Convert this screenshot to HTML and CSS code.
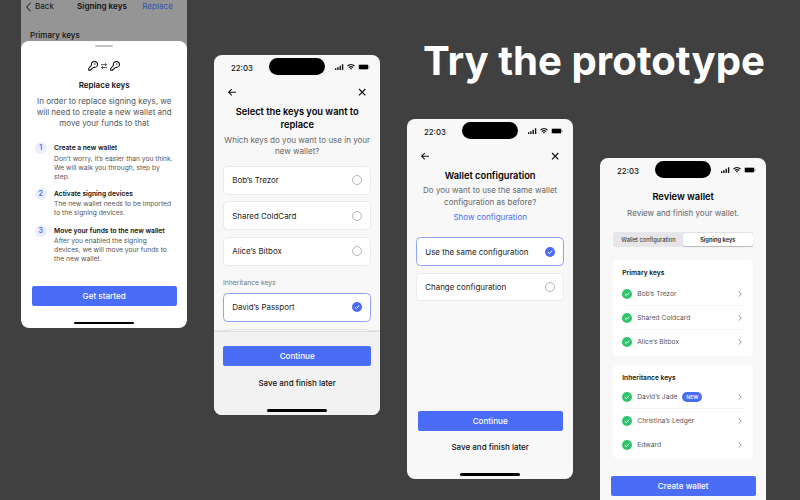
FILE: index.html
```html
<!DOCTYPE html>
<html lang="en">
<head>
<meta charset="utf-8">
<title>Try the prototype</title>
<link rel="stylesheet" href="styles.css">
</head>
<body>
<svg class="defs" width="0" height="0" aria-hidden="true">
  <symbol id="signal" viewBox="0 0 9 6"><path d="M0 4.3h1.4V6H0zM2.2 3.3h1.4V6H2.2zM4.5 1.8h1.4V6H4.5zM6.9 .2h1.4V6H6.9z" fill="#111"/></symbol>
  <symbol id="wifi" viewBox="0 0 8 6"><path d="M.4 2.1a5.2 5.2 0 0 1 7.2 0M1.9 3.6a3 3 0 0 1 4.2 0" fill="none" stroke="#111" stroke-width="1.2"/><path d="M4 5.8 2.9 4.6a1.6 1.6 0 0 1 2.2 0z" fill="#111"/></symbol>
  <symbol id="battery" viewBox="0 0 12 6"><rect x=".2" y=".2" width="10.6" height="5.6" rx="1.6" fill="none" stroke="#999" stroke-width=".4"/><rect x=".8" y=".7" width="9.4" height="4.6" rx="1.1" fill="#000"/><path d="M11.4 2v2" stroke="#999" stroke-width=".6"/></symbol>
  <symbol id="arrow" viewBox="0 0 8 8"><path d="M8 4H.6M3.6 1 .6 4l3 3" fill="none" stroke="#111" stroke-width="1"/></symbol>
  <symbol id="close" viewBox="0 0 8 8"><path d="m1 1 6 6M7 1 1 7" fill="none" stroke="#111" stroke-width="1.15"/></symbol>
  <symbol id="check" viewBox="0 0 10 10"><circle cx="5" cy="5" r="5" fill="currentColor"/><path d="m2.8 5.2 1.5 1.4 2.9-3" fill="none" stroke="#fff" stroke-width="1"/></symbol>
  <symbol id="chevron" viewBox="0 0 4 6"><path d="m.6.4 2.7 2.6L.6 5.6" fill="none" stroke="#777" stroke-width=".8"/></symbol>
  <symbol id="key" viewBox="0 0 10 10"><path d="M4.3 1.4a3 3 0 0 1 4.3 0 3 3 0 0 1 0 4.1 3 3 0 0 1-2.7.8L4.8 7.2l-.9.1-.2 1-1 .1-.2.9H.7V7.5L3.5 4.2a3 3 0 0 1 .8-2.8z" fill="none" stroke="#111" stroke-width="1.05" stroke-linejoin="round"/><circle cx="6.9" cy="3.1" r=".75" fill="#111"/></symbol>
  <symbol id="swap" viewBox="0 0 6 6"><path d="M0 1.6h5.4M4 .2l1.5 1.4L4 3M6 4.5H.6M2 3.1.5 4.5 2 5.9" fill="none" stroke="#222" stroke-width=".75"/></symbol>
</svg>

<main class="board">
  <h1 class="headline">Try the prototype</h1>

  <section class="phone phone-replace">
    <header class="dim-nav">
      <svg class="back-chevron" viewBox="0 0 5 10"><path d="M4.6.6.7 5l3.9 4.4" fill="none" stroke="#111" stroke-width="1"/></svg>
      <span class="back">Back</span>
      <strong class="nav-title">Signing keys</strong>
      <span class="nav-action">Replace</span>
    </header>
    <div class="dim-section">Primary keys</div>
    <div class="sheet">
      <div class="handle"></div>
      <div class="key-swap">
        <svg class="key"><use href="#key"/></svg>
        <svg class="swap"><use href="#swap"/></svg>
        <svg class="key"><use href="#key"/></svg>
      </div>
      <h2 class="sheet-title">Replace keys</h2>
      <p class="sheet-text">In order to replace signing keys, we<br>will need to create a new wallet and<br>move your funds to that</p>
      <ol class="steps">
        <li class="step"><span class="num">1</span><div><h3 class="step-title">Create a new wallet</h3><p class="step-text">Don’t worry, it’s easier than you think.<br>We will walk you through, step by<br>step.</p></div></li>
        <li class="step"><span class="num">2</span><div><h3 class="step-title">Activate signing devices</h3><p class="step-text">The new wallet needs to be imported<br>to the signing devices.</p></div></li>
        <li class="step"><span class="num">3</span><div><h3 class="step-title">Move your funds to the new wallet</h3><p class="step-text">After you enabled the signing<br>devices, we will move your funds to<br>the new wallet.</p></div></li>
      </ol>
      <div class="btn">Get started</div>
      <div class="home"></div>
    </div>
  </section>

  <section class="phone phone-select">
    <header class="status"><span class="time">22:03</span><span class="island"></span><span class="indicators"><svg class="signal"><use href="#signal"/></svg><svg class="wifi"><use href="#wifi"/></svg><svg class="battery"><use href="#battery"/></svg></span></header>
    <nav class="nav"><svg class="nav-icon"><use href="#arrow"/></svg><svg class="nav-icon"><use href="#close"/></svg></nav>
    <h2 class="title">Select the keys you want to<br>replace</h2>
    <p class="subtitle">Which keys do you want to use in your<br>new wallet?</p>
    <div class="options">
      <div class="option"><span>Bob’s Trezor</span><i class="radio"></i></div>
      <div class="option"><span>Shared ColdCard</span><i class="radio"></i></div>
      <div class="option"><span>Alice’s Bitbox</span><i class="radio"></i></div>
    </div>
    <div class="group-label">Inheritance keys</div>
    <div class="options">
      <div class="option selected"><span>David’s Passport</span><svg class="radio-check"><use href="#check"/></svg></div>
      <div class="option peek"></div>
    </div>
    <footer class="footer">
      <div class="btn">Continue</div>
      <div class="link-btn">Save and finish later</div>
      <div class="home"></div>
    </footer>
  </section>

  <section class="phone phone-config">
    <header class="status"><span class="time">22:03</span><span class="island"></span><span class="indicators"><svg class="signal"><use href="#signal"/></svg><svg class="wifi"><use href="#wifi"/></svg><svg class="battery"><use href="#battery"/></svg></span></header>
    <nav class="nav"><svg class="nav-icon"><use href="#arrow"/></svg><svg class="nav-icon"><use href="#close"/></svg></nav>
    <h2 class="title">Wallet configuration</h2>
    <p class="subtitle">Do you want to use the same wallet<br>configuration as before?</p>
    <div class="show-link">Show configuration</div>
    <div class="options">
      <div class="option selected"><span>Use the same configuration</span><svg class="radio-check"><use href="#check"/></svg></div>
      <div class="option"><span>Change configuration</span><i class="radio"></i></div>
    </div>
    <footer class="footer">
      <div class="btn">Continue</div>
      <div class="link-btn">Save and finish later</div>
      <div class="home"></div>
    </footer>
  </section>

  <section class="phone phone-review">
    <header class="status"><span class="time">22:03</span><span class="island"></span><span class="indicators"><svg class="signal"><use href="#signal"/></svg><svg class="wifi"><use href="#wifi"/></svg><svg class="battery"><use href="#battery"/></svg></span></header>
    <h2 class="title">Review wallet</h2>
    <p class="subtitle">Review and finish your wallet.</p>
    <div class="segments"><span class="segment">Wallet configuration</span><span class="segment active">Signing keys</span></div>
    <div class="card">
      <h3 class="card-title">Primary keys</h3>
      <div class="row"><svg class="ok"><use href="#check"/></svg><span>Bob’s Trezor</span><svg class="chevron"><use href="#chevron"/></svg></div>
      <div class="row ruled"><svg class="ok"><use href="#check"/></svg><span>Shared Coldcard</span><svg class="chevron"><use href="#chevron"/></svg></div>
      <div class="row ruled"><svg class="ok"><use href="#check"/></svg><span>Alice’s Bitbox</span><svg class="chevron"><use href="#chevron"/></svg></div>
    </div>
    <div class="card card-inherit">
      <h3 class="card-title">Inheritance keys</h3>
      <div class="row"><svg class="ok"><use href="#check"/></svg><span>David’s Jade</span><span class="badge">NEW</span><svg class="chevron"><use href="#chevron"/></svg></div>
      <div class="row ruled"><svg class="ok"><use href="#check"/></svg><span>Christina’s Ledger</span><svg class="chevron"><use href="#chevron"/></svg></div>
      <div class="row"><svg class="ok"><use href="#check"/></svg><span>Edward</span><svg class="chevron"><use href="#chevron"/></svg></div>
    </div>
    <div class="btn">Create wallet</div>
  </section>
</main>
</body>
</html>
```
FILE: styles.css
```css
* { box-sizing: border-box; margin: 0; padding: 0; }
body { width: 800px; height: 500px; overflow: hidden; background: #404040; font-family: Inter, sans-serif; color: #111; }
svg { display: block; flex: none; }
.defs { position: absolute; }

.board {
  display: grid;
  grid-template-columns: repeat(4, 166.4px);
  column-gap: 26.6px;
  align-items: start;
  height: 500px;
  padding-left: 21px;
  white-space: nowrap;
}
.board > * { grid-row: 1; }
.headline { grid-column: 3 / 5; margin: 36px 0 0 16px; font-size: 40.2px; line-height: 50px; font-weight: 700; color: #fff; }

.phone { display: flex; flex-direction: column; height: 360px; border-radius: 8px; background: #f8f8f8; overflow: hidden; }
.phone-replace { grid-column: 1; height: 327.7px; border-radius: 0 0 8px 8px; background: #959595; }
.phone-select { grid-column: 2; margin-top: 55px; }
.phone-config { grid-column: 3; margin-top: 119px; }
.phone-review { grid-column: 4; margin-top: 158px; }

/* Dimmed screen behind the sheet */
.dim-nav { display: flex; align-items: center; height: 13px; padding: 0 14.5px 0 5px; font-size: 8.1px; line-height: 13px; }
.back-chevron { width: 5px; height: 10px; margin-right: 4px; }
.back { width: 42px; }
.nav-title { font-weight: 600; }
.nav-action { margin-left: auto; color: #3450b4; }
.dim-section { height: 28px; padding: 17px 0 0 9px; font-size: 8px; line-height: 11px; font-weight: 500; }

.sheet { display: flex; flex-direction: column; align-items: center; flex: 1; padding: 4px 10.5px 3.5px; border-radius: 8px; background: #fff; }
.handle { width: 18px; height: 2px; border-radius: 1px; background: #c4c4c4; }
.key-swap { display: flex; align-items: center; gap: 3px; height: 10px; margin-top: 14px; }
.key { width: 10px; height: 10px; }
.swap { width: 6px; height: 6px; }
.sheet-title { margin-top: 8px; font-size: 8px; line-height: 12px; font-weight: 600; }
.sheet-text { margin-top: 5px; font-size: 8px; line-height: 11px; color: #555; text-align: center; }
.steps { align-self: stretch; margin-top: 13px; list-style: none; }
.step { display: flex; gap: 7.2px; margin: 0 0 5px 3px; }
.num { width: 12.4px; height: 12.4px; border-radius: 50%; background: #e9edff; color: #4a6cf7; font-size: 7px; line-height: 12.4px; font-weight: 600; text-align: center; }
.step-title { font-size: 6.68px; line-height: 12px; font-weight: 600; }
.step-text { padding: .6px 0 1.2px; font-size: 6.7px; line-height: 9px; color: #555; }

.btn { align-self: center; width: 145px; height: 20.4px; border-radius: 2px; background: #4a6cf7; color: #fff; font-size: 8.1px; line-height: 20.4px; font-weight: 500; text-align: center; }
.home { align-self: center; width: 60px; height: 2.3px; border-radius: 2px; background: #000; }
.sheet .btn { margin-top: 15.4px; }
.sheet .home { margin-top: auto; }

.status { display: grid; grid-template-columns: 55.5px 56px 1fr; align-items: center; height: 25px; flex: none; }
.time { padding: 1px 0 0 17px; font-size: 7.8px; line-height: 12px; font-weight: 500; }
.island { height: 16.7px; margin-top: -2px; border-radius: 9px; background: #000; }
.indicators { display: flex; align-items: center; gap: 3px; padding-left: 9.6px; margin-top: -2px; }
.signal { width: 9px; height: 6px; }
.wifi { width: 8px; height: 6px; }
.battery { width: 12px; height: 6px; }
.nav { display: flex; justify-content: space-between; align-items: center; height: 24px; padding: 0 13.6px; flex: none; }
.nav-icon { width: 8.4px; height: 8.4px; }

.title { font-size: 9.3px; line-height: 13px; font-weight: 600; text-align: center; color: #000; }
.subtitle { margin-top: 4px; font-size: 8px; line-height: 11.3px; color: #666; text-align: center; }
.options { display: grid; gap: 6.8px; padding: 0 9px; }
.option { display: flex; justify-content: space-between; align-items: center; height: 28.7px; padding: 0 8.3px; border: 1px solid #eaeaea; border-radius: 4.5px; background: #fff; font-size: 7.93px; color: #222; }
.option.selected { border-color: #8ea4fa; }
.radio { width: 10px; height: 10px; border: .9px solid #b4b4b4; border-radius: 50%; }
.radio-check { width: 10px; height: 10px; color: #4a6cf7; }
.group-label { margin: 11.4px 0 5px 9px; font-size: 6.8px; line-height: 11px; color: #777; }
.phone-select .options { margin-top: 8.4px; }
.phone-select .group-label + .options { height: 39px; margin-top: 0; overflow: hidden; }
.phone-select .title { margin-top: 1px; }

.footer { display: flex; flex-direction: column; height: 83px; flex: none; margin-top: auto; padding-top: 14.5px; }
.phone-select .footer { padding-top: 14px; background: #f2f2f2; box-shadow: 0 -1px 2px rgba(0, 0, 0, .18); }
.phone-select .btn { width: 148.5px; }
.phone-select .link-btn { margin-top: 11px; }
.link-btn { margin-top: 10px; font-size: 8px; line-height: 13px; font-weight: 500; text-align: center; }
.footer .home { margin: auto 0 3.5px; }
.show-link { margin-top: 3.6px; font-size: 8px; line-height: 11px; color: #4a6cf7; text-align: center; }
.phone-config .title { margin-top: 1px; }
.phone-config .subtitle { margin-top: 3.4px; }
.phone-config .options { margin-top: 14.6px; }

.phone-review .title { margin-top: 7.4px; }
.phone-review .subtitle { margin-top: 4.6px; }
.segments { display: grid; grid-template-columns: 1fr 1fr; height: 14.5px; margin: 12.8px 13px 0; padding: .8px; border-radius: 3px; background: #e6e6e8; }
.segment { font-size: 5.75px; line-height: 13.4px; text-align: center; color: #222; }
.segment.active { border-radius: 2.5px; background: #fff; box-shadow: 0 .5px 1px rgba(0, 0, 0, .2); font-weight: 600; }
.card { height: 96px; margin: 13.4px 13px 0; padding: 7px 9px 0 9.3px; border-radius: 5px; background: #fff; flex: none; }
.card-title { height: 15px; font-size: 6.7px; line-height: 12px; font-weight: 600; }
.row { display: flex; align-items: center; height: 24px; font-size: 6.7px; color: #555; }
.row.ruled { box-shadow: 0 -1px #f3f3f3; }
.ok { width: 10px; height: 10px; margin-right: 5px; color: #30c46c; }
.chevron { width: 4px; height: 6px; margin: 0 2.5px 0 auto; }
.badge { width: 20px; height: 10px; margin-left: 5px; border-radius: 5px; background: #4a6cf7; color: #fff; font-size: 5.2px; line-height: 10px; font-weight: 500; text-align: center; }
.card-inherit { height: 94px; margin-top: 9px; }
.card-inherit .card-title { height: 13px; }
.phone-review > .btn { margin-top: 17px; flex: none; }
```
